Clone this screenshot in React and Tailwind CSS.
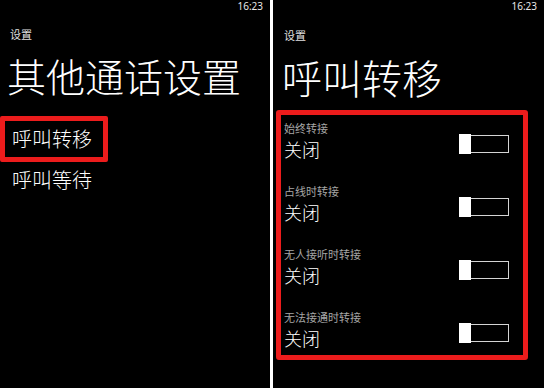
const cjk = { fontFamily: '"Noto Sans CJK SC", "Noto Sans", sans-serif' };

const items = ['始终转接', '占线时转接', '无人接听时转接', '无法接通时转接'];

const Toggle = () => (
  <div className="flex items-center">
    <div className="w-[12px] h-[20px] bg-white" />
    <div className="w-[38px] h-[18px] border border-l-0 border-[#d4d4d4]" />
  </div>
);

const Clock = () => (
  <div className="flex justify-end pr-[7px] h-[14px]">
    <span className="text-[10px] leading-[13px] text-[#e8e8e8]" style={{ fontFamily: '"Noto Sans", sans-serif' }}>
      16:23
    </span>
  </div>
);

export default function App() {
  return (
    <div className="flex w-[544px] h-[388px] bg-black text-white overflow-hidden" style={cjk}>
      {/* left screen */}
      <div className="w-[270px] h-full flex flex-col">
        <Clock />
        <div className="mt-[13px] pl-[10px] text-[11px] leading-[14px] text-[#e0e0e0]">设置</div>
        <div className="mt-[14px] pl-[7px] text-[39px] leading-[40px] font-light whitespace-nowrap">其他通话设置</div>
        <div className="mt-[21px] w-[108px] h-[46px] border-[5px] border-[#ec1c1c] rounded-[2px] pl-[7px] text-[20px] leading-[36px] font-light">
          呼叫转移
        </div>
        <div className="mt-[6px] pl-[12px] text-[20px] leading-[24px] font-light">呼叫等待</div>
      </div>

      <div className="w-[3px] h-full bg-white" />

      {/* right screen */}
      <div className="flex-1 h-full flex flex-col">
        <Clock />
        <div className="mt-[14px] pl-[11px] text-[11px] leading-[14px] text-[#e0e0e0]">设置</div>
        <div className="mt-[15px] pl-[9px] text-[40px] leading-[40px] font-light whitespace-nowrap">呼叫转移</div>
        <div className="mt-[13px] ml-[3px] w-[252px] h-[250px] border-[5px] border-[#ec1c1c] rounded-[3px] pt-[6px] pl-[3px] pr-[14px]">
          {items.map((label, i) => (
            <div key={label} className={`flex justify-between items-start ${i < 3 ? 'h-[63px]' : ''}`}>
              <div className="flex flex-col">
                <span className="text-[11px] leading-[14px] text-[#a6a6a6]">{label}</span>
                <span className="mt-[4px] text-[18px] leading-[20px] font-light">关闭</span>
              </div>
              <div className="mt-[13px]">
                <Toggle />
              </div>
            </div>
          ))}
        </div>
      </div>
    </div>
  );
}
